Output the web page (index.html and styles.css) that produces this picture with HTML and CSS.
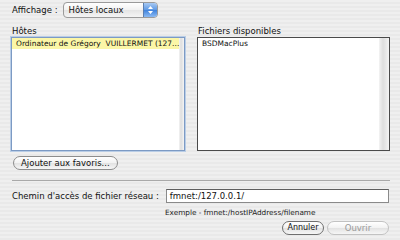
FILE: index.html
```html
<!DOCTYPE html>
<html lang="fr">
<head>
<meta charset="utf-8">
<link rel="stylesheet" href="styles.css">
</head>
<body>
<div class="dialog">
  <div class="top">
    <span class="lbl">Affichage :</span>
    <div class="popup">
      <span class="popup-text">Hôtes locaux</span>
      <span class="stepper"><svg width="7" height="10" viewBox="0 0 7 10"><path d="M1 4 L3.5 1 L6 4 Z M1 6 L3.5 9 L6 6 Z" fill="#fff"/></svg></span>
    </div>
  </div>
  <div class="lists">
    <div class="col">
      <div class="col-title">Hôtes</div>
      <div class="listbox focus">
        <div class="rows">
          <div class="row sel">Ordinateur de Grégory&nbsp; VUILLERMET (127...</div>
        </div>
        <div class="track"></div>
      </div>
    </div>
    <div class="col">
      <div class="col-title">Fichiers disponibles</div>
      <div class="listbox dark">
        <div class="rows">
          <div class="row">BSDMacPlus</div>
        </div>
        <div class="track"></div>
      </div>
    </div>
  </div>
  <div class="fav-row"><span class="btn">Ajouter aux favoris...</span></div>
  <div class="sep"></div>
  <div class="path-row">
    <span class="lbl">Chemin d'accès de fichier réseau :</span>
    <div class="field">fmnet:/127.0.0.1/</div>
  </div>
  <div class="example">Exemple - fmnet:/hostIPAddress/filename</div>
  <div class="actions">
    <span class="btn default">Annuler</span>
    <span class="btn disabled">Ouvrir</span>
  </div>
</div>
</body>
</html>
```
FILE: styles.css
```css
html, body {
  margin: 0;
  padding: 0;
}
body {
  width: 400px;
  height: 240px;
  overflow: hidden;
  background: repeating-linear-gradient(to bottom, #efefef 0px, #efefef 2px, #e9e9e9 2px, #e9e9e9 4px);
  font-family: "DejaVu Sans", "Liberation Sans", sans-serif;
  color: #111;
}
.dialog {
  display: flex;
  flex-direction: column;
  padding: 2px 10px 0 11px;
}
.top {
  display: flex;
  align-items: center;
  gap: 5px;
  height: 16px;
  padding-left: 1px;
}
.lbl {
  font-size: 8.5px;
}
.popup {
  width: 95px;
  height: 16px;
  box-sizing: border-box;
  border: 1px solid #9a9a9a;
  border-radius: 4px;
  background: linear-gradient(#ffffff, #f1f1f1 50%, #e4e4e4 51%, #f4f4f4);
  display: flex;
  align-items: center;
  overflow: hidden;
}
.popup-text {
  flex: 1;
  font-size: 8.5px;
  padding-left: 5px;
}
.stepper {
  width: 13px;
  height: 14px;
  background: linear-gradient(#a7c9f3, #5d98e4 50%, #3f82dc 51%, #8bbaf3);
  display: flex;
  align-items: center;
  justify-content: center;
  border-left: 1px solid #5a7eb0;
}
.lists {
  display: grid;
  grid-template-columns: 174px 193px;
  column-gap: 12px;
  margin-top: 7px;
}
.col {
  display: flex;
  flex-direction: column;
}
.col-title {
  font-size: 8.5px;
  height: 12px;
  line-height: 12px;
  padding-left: 1px;
}
.listbox {
  height: 114px;
  box-sizing: border-box;
  background: #fff;
  display: flex;
}
.listbox.focus {
  border: 1px solid #7c9ac4;
  box-shadow: 0 0 0 1px #b9cde6;
}
.listbox.dark {
  border: 1px solid #4a4a4a;
}
.rows {
  flex: 1;
  display: flex;
  flex-direction: column;
}
.row {
  font-size: 7.5px;
  height: 11px;
  line-height: 11px;
  padding-left: 4px;
  white-space: nowrap;
  overflow: hidden;
}
.row.sel {
  background: #fbf6a7;
}
.track {
  width: 10px;
  background: linear-gradient(to right, #f3f3f3, #dedede 40%, #e8e8e8 70%, #f5f5f5);
}
.fav-row {
  display: flex;
  margin-top: 5px;
  padding-left: 2px;
}
.btn {
  font-size: 8.5px;
  height: 14px;
  line-height: 12px;
  box-sizing: border-box;
  padding: 0 7px;
  border: 1px solid #8d8d8d;
  border-radius: 8px;
  background: linear-gradient(#ffffff, #f2f2f2 50%, #e2e2e2 51%, #f6f6f6);
  color: #111;
  text-align: center;
  white-space: nowrap;
}
.btn.default {
  width: 42px;
  padding: 0;
  font-size: 8px;
  border-color: #6f6f6f;
}
.btn.disabled {
  width: 62px;
  padding: 0;
  color: #9a9a9a;
  border-color: #c2c2c2;
}
.sep {
  height: 1px;
  background: #a9a9a9;
  margin: 10px 0 0 1px;
  width: 378px;
}
.path-row {
  display: flex;
  align-items: center;
  gap: 7px;
  margin-top: 8px;
  padding-left: 1px;
}
.field {
  width: 223px;
  height: 14px;
  box-sizing: border-box;
  border: 1px solid #8a8a8a;
  border-top-color: #5f5f5f;
  background: #fff;
  font-size: 8.5px;
  line-height: 12px;
  padding-left: 3px;
}
.example {
  font-size: 7.3px;
  color: #222;
  margin-top: 5px;
  padding-left: 154px;
}
.actions {
  display: flex;
  justify-content: flex-end;
  gap: 3px;
  margin-top: 4px;
  padding-right: 1px;
}
```
